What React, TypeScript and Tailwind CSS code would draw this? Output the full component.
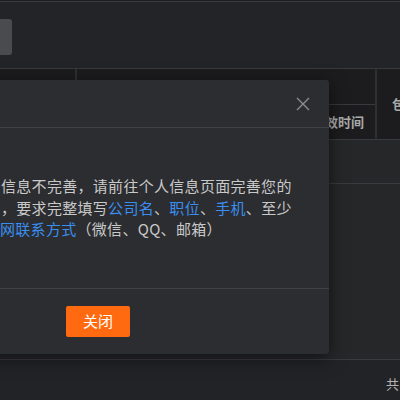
import React from "react";

const cjk = { fontFamily: '"Noto Sans CJK SC", "Noto Sans", sans-serif' };

function CloseIcon() {
  return (
    <svg width="14" height="14" viewBox="0 0 14 14" fill="none" stroke="#8e8f92" strokeWidth="1.3">
      <path d="M1 1L13 13M13 1L1 13" />
    </svg>
  );
}

function ProfileDialog() {
  return (
    <div
      className="absolute left-[-60px] top-[80px] w-[389px] rounded-[3px] bg-[#2c2d30] shadow-[0_4px_18px_rgba(0,0,0,0.55)]"
      style={cjk}
    >
      {/* header */}
      <div className="flex h-[48px] items-center justify-end border-b border-[#404144] pr-[19px]">
        <CloseIcon />
      </div>

      {/* body */}
      <div className="h-[160px] pl-[61px] pt-[47px] text-[15px] leading-[21.5px] tracking-[0.3px] text-[#c9c9c9]">
        <div className="whitespace-nowrap">信息不完善，请前往个人信息页面完善您的</div>
        <div className="whitespace-nowrap">
          ，要求完整填写<span className="text-[#3a8ef0]">公司名</span>、
          <span className="text-[#3a8ef0]">职位</span>、<span className="text-[#3a8ef0]">手机</span>、至少
        </div>
        <div className="whitespace-nowrap ml-[-1px]">
          <span className="text-[#3a8ef0]">网联系方式</span>（微信、QQ、邮箱）
        </div>
      </div>

      {/* footer */}
      <div className="flex h-[66px] items-start border-t border-[#404144] pl-[126px] pt-[17px]">
        <button className="flex h-[31px] w-[64px] items-center justify-center rounded-[2px] bg-[#ff6a10] text-[15px] text-white">
          关闭
        </button>
      </div>
    </div>
  );
}

export default function App() {
  return (
    <div className="relative flex h-[400px] w-[400px] flex-col overflow-hidden bg-[#232427]" style={cjk}>
      <div className="h-px bg-[#1d1e20]" />
      <div className="h-px bg-[#3a3b3e]" />

      {/* toolbar */}
      <div className="h-[66px] pt-[17px]">
        <div className="h-[36px] w-[12px] rounded-r-[3px] bg-[#4a4b4e]" />
      </div>
      <div className="h-px bg-[#38393c]" />

      {/* table header */}
      <div className="flex h-[70px] bg-[#1c1c1e] text-[13px] font-bold text-[#aaaaaa]">
        <div className="w-[75px] shrink-0" />
        <div className="w-[2px] shrink-0 bg-[#2e2f31]" />
        <div className="flex min-w-0 flex-1 flex-col">
          <div className="h-[35px]" />
          <div className="h-px bg-[#38393c]" />
          <div className="flex flex-1 items-center justify-end pr-[11px] whitespace-nowrap">生效时间</div>
        </div>
        <div className="w-[2px] shrink-0 bg-[#2e2f31]" />
        <div className="flex w-[23px] min-w-0 shrink-0 items-center pl-[15px] whitespace-nowrap">包含</div>
      </div>
      <div className="h-px bg-[#3a3b3e]" />

      {/* table rows */}
      <div className="h-[43px] bg-[#262729]" />
      <div className="h-px bg-[#3a3b3e]" />
      <div className="h-[175px] bg-[#262729]" />
      <div className="h-px bg-[#3a3b3e]" />

      {/* pagination */}
      <div className="flex flex-1 items-center bg-[#222326] pl-[386px] pt-[8px] text-[13px] text-[#b4b4b4] whitespace-nowrap">
        <span>共 0 条</span>
      </div>

      <ProfileDialog />
    </div>
  );
}
